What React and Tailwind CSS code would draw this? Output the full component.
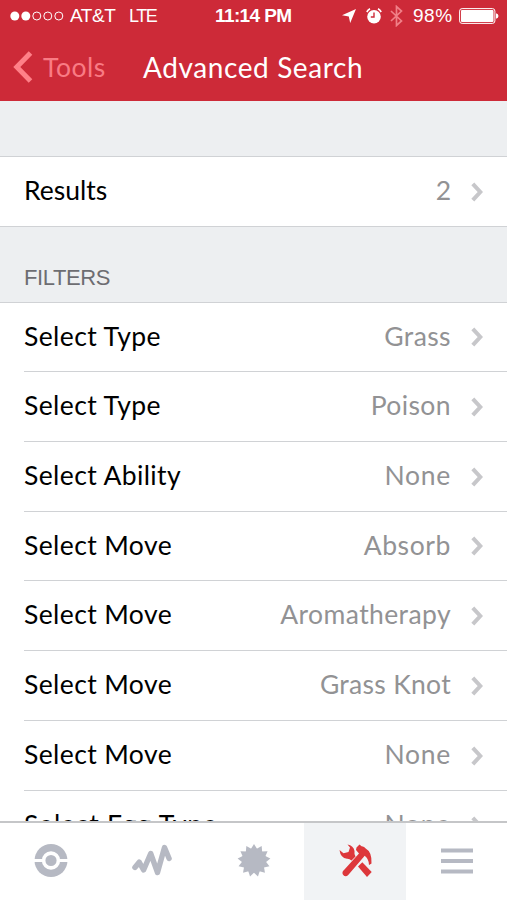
import React from 'react';

const filters = [
  { label: 'Select Type', value: 'Grass', height: 'h-[69px]', labelSpacing: 'tracking-[0.4px]', valueSpacing: 'tracking-[0.4px]' },
  { label: 'Select Type', value: 'Poison', height: 'h-[70px]', labelSpacing: 'tracking-[0.4px]', valueSpacing: 'tracking-[0.4px]' },
  { label: 'Select Ability', value: 'None', height: 'h-[70px]', labelSpacing: 'tracking-[0.4px]', valueSpacing: 'tracking-[0.7px]' },
  { label: 'Select Move', value: 'Absorb', height: 'h-[69px]', labelSpacing: 'tracking-[0.4px]', valueSpacing: 'tracking-[0.6px]' },
  { label: 'Select Move', value: 'Aromatherapy', height: 'h-[70px]', labelSpacing: 'tracking-[0.4px]', valueSpacing: 'tracking-[0.4px]' },
  { label: 'Select Move', value: 'Grass Knot', height: 'h-[70px]', labelSpacing: 'tracking-[0.4px]', valueSpacing: 'tracking-[0.3px]' },
  { label: 'Select Move', value: 'None', height: 'h-[70px]', labelSpacing: 'tracking-[0.4px]', valueSpacing: 'tracking-[0.7px]' },
  { label: 'Select Egg Type', value: 'None', height: 'h-[70px]', labelSpacing: 'tracking-[0.8px]', valueSpacing: 'tracking-[0.7px]' },
];

const Chevron = () => (
  <svg className="ml-5 h-5 w-3 shrink-0" viewBox="0 0 12 20" fill="none" stroke="#c7c7ca" strokeWidth="4">
    <path d="M1.8 1.8 9.3 10 1.8 18.2" />
  </svg>
);

const Row = ({ label, value, height, labelSpacing, valueSpacing }) => (
  <div className={`flex shrink-0 items-center border-b border-[#d0d2d5] pr-6 ${height}`}>
    <span className={`-mt-[3px] text-[26.5px] leading-8 text-black ${labelSpacing}`}>{label}</span>
    <span className={`-mt-[3px] ml-auto text-[26.5px] leading-8 text-[#929294] ${valueSpacing}`}>{value}</span>
    <Chevron />
  </div>
);

const StatusBar = () => (
  <div className="flex h-8 items-center pl-[10px] pr-2 font-['Liberation_Sans',sans-serif] text-[19px] text-white">
    <svg className="h-[10px] w-[54px]" viewBox="0 0 54 10" fill="none" stroke="white">
      <circle cx="4.8" cy="5" r="4.5" fill="white" stroke="none" />
      <circle cx="15.8" cy="5" r="4.5" fill="white" stroke="none" />
      <circle cx="26.8" cy="5" r="4" />
      <circle cx="37.8" cy="5" r="4" />
      <circle cx="48.8" cy="5" r="4" />
    </svg>
    <span className="ml-[6px] w-[59px] whitespace-nowrap tracking-[-0.4px]">AT&amp;T</span>
    <span className="w-[86px] text-[18px] tracking-[-1.4px]">LTE</span>
    <span className="w-[127px] whitespace-nowrap font-bold tracking-[-0.6px]">11:14 PM</span>
    <svg className="h-[14px] w-[14px]" viewBox="0 0 14 14" fill="white">
      <path d="M14 0 8.2 14 6.8 7.6 0 6.2z" />
    </svg>
    <svg className="ml-[10px] h-4 w-4" viewBox="0 0 16 16" fill="none">
      <circle cx="8" cy="8.7" r="6.8" fill="white" />
      <path d="M.8 4A8 8 0 0 1 4 .8M12 .8A8 8 0 0 1 15.2 4" stroke="white" strokeWidth="1.6" />
      <path d="M8 4.5V9H4.8" stroke="#cd2a38" strokeWidth="1.4" />
    </svg>
    <svg className="ml-2 h-[22px] w-[13px]" viewBox="0 0 13 22" fill="none" stroke="#f08088" strokeWidth="1.7">
      <path d="M1 6 11.5 16 6.5 20.5V1.5L11.5 6 1 16" />
    </svg>
    <span className="ml-[10px] w-[46px] whitespace-nowrap tracking-[0.5px]">98%</span>
    <svg className="h-4 w-10" viewBox="0 0 40 16" fill="white">
      <rect x=".6" y=".6" width="35.3" height="14.8" rx="2.5" fill="none" stroke="white" strokeWidth="1" />
      <rect x="2" y="2" width="32.5" height="12" rx="1" />
      <path d="M37 5.2Q39.5 6 39.5 8T37 10.8z" />
    </svg>
  </div>
);

const TabBar = () => (
  <nav className="flex h-[79px] shrink-0 border-t-2 border-[#c5c6c8] bg-white">
    <div className="flex w-[101px] justify-center pt-5">
      <svg className="h-[35px] w-[34px]" viewBox="0 0 34 35">
        <circle cx="17" cy="17.5" r="16.5" fill="#b6b9c3" />
        <path d="M0 17.5h34" stroke="white" strokeWidth="3" />
        <circle cx="17" cy="17.5" r="7.4" fill="#b6b9c3" stroke="white" strokeWidth="3.6" />
      </svg>
    </div>
    <div className="flex w-[102px] justify-center pt-5">
      <svg className="h-[35px] w-10" viewBox="0 0 40 35" fill="none" stroke="#b6b9c3" strokeWidth="5.4" strokeLinecap="round" strokeLinejoin="round">
        <path d="M2.9 24.5 7.2 19.2 11.6 27 18.7 10.5 25.5 29.5 32.5 4.5 37.1 15.5" />
      </svg>
    </div>
    <div className="flex w-[101px] justify-center pt-5">
      <svg className="h-[35px] w-[34px]" viewBox="-17 -17 34 34" fill="#b6b9c3">
        <circle r="12" />
        {[...Array(13)].map((_, i) => (
          <path key={i} d="M-3.6 -10.8 0-16.5 3.6-10.8z" transform={`rotate(${(i * 360) / 13})`} />
        ))}
      </svg>
    </div>
    <div className="flex w-[102px] justify-center bg-[#f1f3f5] pt-5">
      <svg className="h-[35px] w-[35px]" viewBox="0 0 35 35" fill="#dd373b">
        <path d="M9.5 1.5Q15.5 2.5 16.5 8q-.5 3 1 5.5L13.5 17.5Q11.5 15.5 9 15.7 2.5 15 1.5 7L5.5 10.3 10.5 9 12 4.5z" />
        <path d="M21.5 1.5 23.5 3.3Q26 3 28 5.8 34 9 33.5 20.5L31 22Q30.8 15.5 26.7 12.7L10 32.2Q7.5 34.5 5 31.7 3.5 29 6 27L21 10.5 18 7 18.5 4.5z" />
        <path d="M20 23.5 24.3 19.3 33.7 29 29 34z" />
      </svg>
    </div>
    <div className="flex w-[101px] justify-center pt-[23px]">
      <svg className="h-[30px] w-8" viewBox="0 0 32 30" stroke="#b6b9c3" strokeWidth="4">
        <path d="M0 4.5h32M0 15h32M0 25.5h32" />
      </svg>
    </div>
  </nav>
);

export default function App() {
  return (
    <div className="flex h-[900px] w-[507px] flex-col overflow-hidden bg-[#edeff1] font-['Lato',sans-serif]">
      <header className="h-[101px] shrink-0 bg-[#cd2a38]">
        <StatusBar />
        <div className="flex h-[69px] items-center pl-[13px]">
          <svg className="h-8 w-5" viewBox="0 0 20 32" fill="none" stroke="#ff8088" strokeWidth="5">
            <path d="M17.5 2 3.8 16l13.7 14" />
          </svg>
          <span className="ml-[10px] w-[100px] text-[26.5px] leading-8 tracking-[0.5px] text-[#f97b84]">Tools</span>
          <h1 className="whitespace-nowrap text-[28px] leading-8 tracking-[0.6px] text-white">Advanced Search</h1>
        </div>
      </header>
      <main className="flex min-h-0 flex-1 flex-col overflow-hidden">
        <section className="mt-[55px] border-t border-[#d0d2d5] bg-white pl-6">
          <div className="-ml-6 border-b border-[#d0d2d5] pl-6">
            <div className="-mb-px">
              <Row label="Results" value="2" height="h-[70px]" labelSpacing="tracking-[0px]" valueSpacing="tracking-[0px]" />
            </div>
          </div>
        </section>
        <h2 className="flex h-[75px] shrink-0 items-end pb-[9px] pl-6 font-['Liberation_Sans',sans-serif] text-[22px] leading-[30px] tracking-[-0.4px] text-[#6d6d72]">FILTERS</h2>
        <section className="border-t border-[#d0d2d5] bg-white pl-6">
          {filters.map((filter, i) => (
            <Row key={i} {...filter} />
          ))}
        </section>
      </main>
      <TabBar />
    </div>
  );
}
